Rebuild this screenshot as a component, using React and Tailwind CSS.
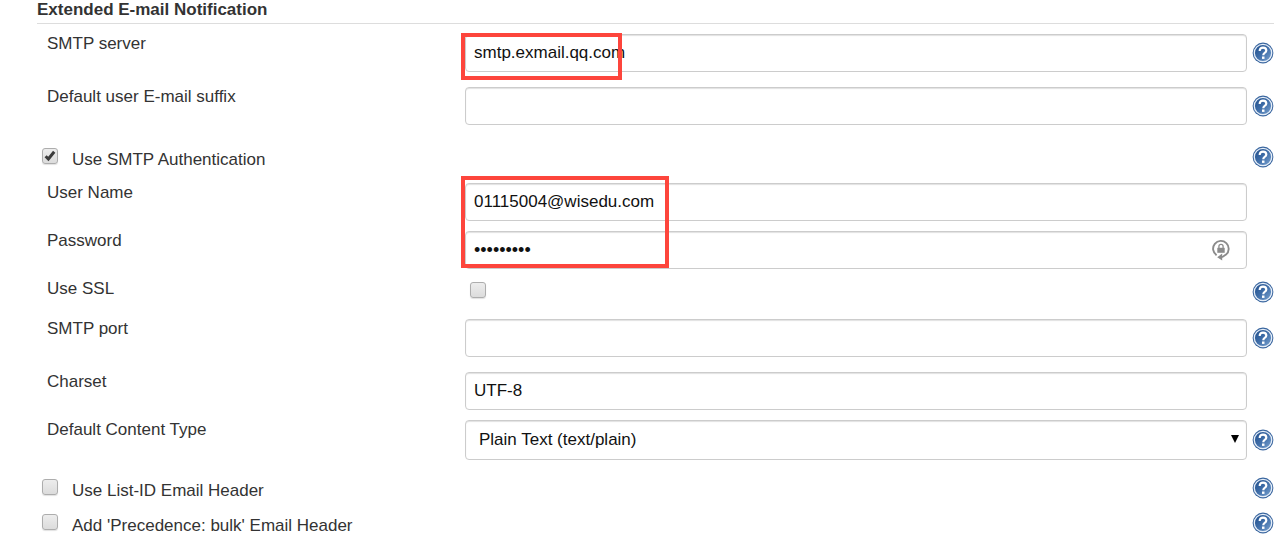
import { useState } from "react";

const fieldClass =
  "block h-[38px] w-full rounded-[4px] border border-[#ccc] bg-white px-2 text-[#111] shadow-[inset_0_1px_1px_rgba(0,0,0,0.12)] outline-none";

function HelpIcon() {
  return (
    <svg viewBox="0 0 22 22" className="block size-[22px]" aria-hidden="true">
      <defs>
        <linearGradient id="help-fill" x1="0" y1="0" x2="1" y2="1">
          <stop offset="0" stopColor="#1f4d8a" />
          <stop offset="0.5" stopColor="#3f6ea9" />
          <stop offset="1" stopColor="#7fa6d2" />
        </linearGradient>
      </defs>
      <circle cx="11" cy="11" r="10.4" fill="#3a669f" />
      <circle cx="11" cy="11" r="8.7" fill="url(#help-fill)" stroke="#e6eef8" strokeWidth="1.3" />
      <path
        d="M7.7 8.9C7.7 6.6 9.1 5.6 11 5.6s3.3 1 3.3 2.8c0 2.3-3 2.4-3 4.8"
        fill="none"
        stroke="#fff"
        strokeWidth="2.2"
      />
      <rect x="10" y="14.5" width="2.5" height="2.4" fill="#fff" />
    </svg>
  );
}

function Help({ topic }) {
  return (
    <button type="button" aria-label={"Help for " + topic} className="block size-[22px] rounded-full">
      <HelpIcon />
    </button>
  );
}

function Row({ id, label, help, children }) {
  return (
    <div
      className={
        "grid grid-cols-[minmax(0,428px)_minmax(0,1fr)_27px] pt-[5px] " + (help ? "pb-[10px]" : "pb-[5px]")
      }
    >
      <label htmlFor={id} className="justify-self-start pl-[10px] leading-5">
        {label}
      </label>
      <div className="relative">{children}</div>
      <div className="flex items-center pl-[5px]">{help && <Help topic={label} />}</div>
    </div>
  );
}

function Checkbox({ id, checked, onChange }) {
  return (
    <span className="grid size-4 shrink-0">
      <input
        id={id}
        type="checkbox"
        checked={checked}
        onChange={onChange}
        className="col-start-1 row-start-1 size-4 appearance-none rounded-[3px] border border-[#adadad] bg-linear-to-b from-[#ededed] to-[#dcdcdc] shadow-[0_1px_1px_rgba(0,0,0,0.12)]"
      />
      {checked && (
        <svg viewBox="0 0 16 16" className="pointer-events-none col-start-1 row-start-1 size-4" aria-hidden="true">
          <path d="M3.6 8.2l2.8 2.8L12.2 3.8" fill="none" stroke="#3c3c3c" strokeWidth="3" />
        </svg>
      )}
    </span>
  );
}

function CheckRow({ id, label, checked, onChange, className }) {
  return (
    <div className={"flex items-start " + className}>
      <div className="flex flex-1 items-start gap-[14px] pl-[5px]">
        <div className="pt-[2px]">
          <Checkbox id={id} checked={checked} onChange={onChange} />
        </div>
        <label htmlFor={id} className="pt-1 leading-5">
          {label}
        </label>
      </div>
      <Help topic={label} />
    </div>
  );
}

export default function App() {
  const [flags, setFlags] = useState({ auth: true, ssl: false, listId: false, bulk: false });
  const toggle = (key) => () => setFlags((f) => ({ ...f, [key]: !f[key] }));

  return (
    <form className="bg-white pr-1 pl-[37px] font-['Liberation_Sans',Arial,sans-serif] text-[17px] text-[#333]">
      <h2 className="mb-[5px] border-b border-[#ddd] pb-[3px] text-[17px] leading-5 font-bold">
        Extended E-mail Notification
      </h2>
      <Row id="server" label="SMTP server" help>
        <input id="server" type="text" defaultValue="smtp.exmail.qq.com" className={fieldClass} />
        <div className="pointer-events-none absolute -top-px -left-1 h-[47px] w-[161px] border-4 border-[#fd453c]" />
      </Row>
      <Row id="suffix" label="Default user E-mail suffix" help>
        <input id="suffix" type="text" className={fieldClass} />
      </Row>
      <CheckRow
        id="auth"
        label="Use SMTP Authentication"
        checked={flags.auth}
        onChange={toggle("auth")}
        className="pt-[11px] pb-[8px]"
      />
      <Row id="user" label="User Name">
        <input id="user" type="text" defaultValue="01115004@wisedu.com" className={fieldClass} />
        <div className="pointer-events-none absolute -top-[7px] -left-1 z-10 h-[92px] w-[208px] border-4 border-[#fd453c]" />
      </Row>
      <Row id="password" label="Password">
        <input id="password" type="password" defaultValue="wisedu123" className={fieldClass + " text-[18px]"} />
        <svg viewBox="0 0 20 22" className="absolute top-2 right-4 h-[22px] w-5" aria-hidden="true">
          <path d="M5.6 16.2A7.8 7.8 0 1 1 15 15.6L11 18.2" fill="none" stroke="#8b8b8b" strokeWidth="1.9" />
          <path d="M6.2 18.2l5-3.6v7z" fill="#8b8b8b" />
          <rect x="6.3" y="8.8" width="7.4" height="5" fill="#8b8b8b" />
          <path d="M7.9 9V7.5a2.1 2.1 0 0 1 4.2 0V9" fill="none" stroke="#8b8b8b" strokeWidth="1.3" />
        </svg>
      </Row>
      <Row id="ssl" label="Use SSL" help>
        <div className="flex h-[25px] items-start pt-[3px] pl-[5px]">
          <Checkbox id="ssl" checked={flags.ssl} onChange={toggle("ssl")} />
        </div>
      </Row>
      <Row id="port" label="SMTP port" help>
        <input id="port" type="text" className={fieldClass} />
      </Row>
      <Row id="charset" label="Charset">
        <input id="charset" type="text" defaultValue="UTF-8" className={fieldClass} />
      </Row>
      <Row id="type" label="Default Content Type" help>
        <select
          id="type"
          defaultValue="plain"
          className="block h-10 w-full appearance-none rounded-[4px] border border-[#ccc] bg-white px-[13px] text-[#111] shadow-[inset_0_1px_1px_rgba(0,0,0,0.12)] outline-none"
        >
          <option value="plain">Plain Text (text/plain)</option>
          <option value="html">HTML (text/html)</option>
        </select>
        <svg viewBox="0 0 8 8" className="pointer-events-none absolute top-[15px] right-2 size-2" aria-hidden="true">
          <path d="M0 0h8L4 8z" fill="#000" />
        </svg>
      </Row>
      <CheckRow
        id="listId"
        label="Use List-ID Email Header"
        checked={flags.listId}
        onChange={toggle("listId")}
        className="pt-[7px] pb-1"
      />
      <CheckRow
        id="bulk"
        label="Add 'Precedence: bulk' Email Header"
        checked={flags.bulk}
        onChange={toggle("bulk")}
        className="pt-[7px]"
      />
    </form>
  );
}
